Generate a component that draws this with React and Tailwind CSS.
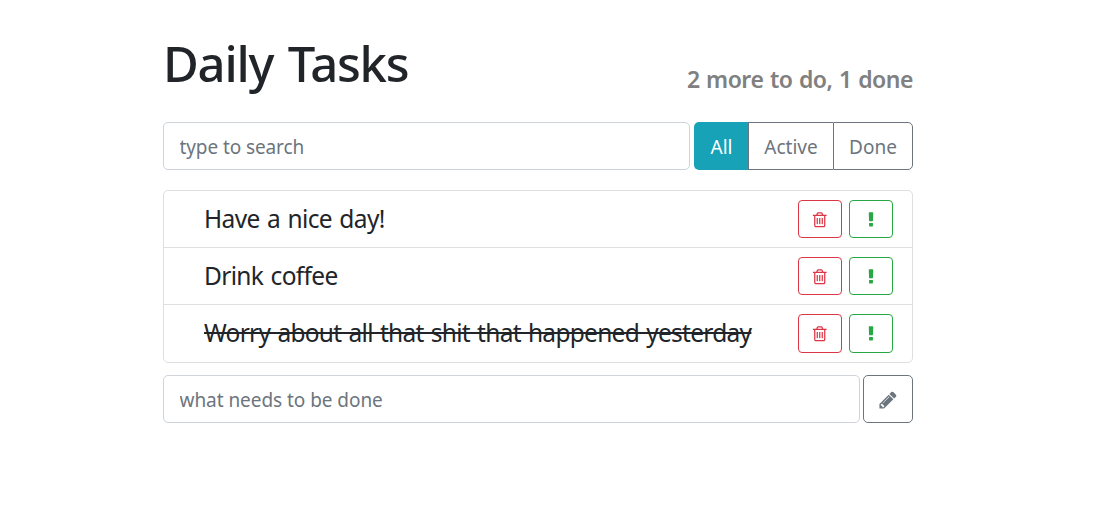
import React from "react";

function Icon({ path, className }) {
  return (
    <svg viewBox="0 0 1792 1792" fill="currentColor" className={className} aria-hidden="true">
      <path d={path} />
    </svg>
  );
}

const TRASH =
  "M704 736v576q0 14-9 23t-23 9h-64q-14 0-23-9t-9-23v-576q0-14 9-23t23-9h64q14 0 23 9t9 23zm256 0v576q0 14-9 23t-23 9h-64q-14 0-23-9t-9-23v-576q0-14 9-23t23-9h64q14 0 23 9t9 23zm256 0v576q0 14-9 23t-23 9h-64q-14 0-23-9t-9-23v-576q0-14 9-23t23-9h64q14 0 23 9t9 23zm128 724v-948h-896v948q0 22 7 40.5t14.5 27 10.5 8.5h832q3 0 10.5-8.5t14.5-27 7-40.5zm-672-1076h448l-48-117q-7-9-17-11h-317q-10 2-17 11zm928 32v64q0 14-9 23t-23 9h-96v948q0 83-47 143.5t-113 60.5h-832q-66 0-113-58.5t-47-141.5v-952h-96q-14 0-23-9t-9-23v-64q0-14 9-23t23-9h309l70-167q15-37 54-63t79-26h320q40 0 79 26t54 63l70 167h309q14 0 23 9t9 23z";
const PENCIL =
  "M491 1536l91-91-235-235-91 91v107h128v128h107zm523-928q0-22-22-22-10 0-17 7l-542 542q-7 7-7 17 0 22 22 22 10 0 17-7l542-542q7-7 7-17zm-54-192l416 416-832 832h-416v-416zm683 96q0 53-37 90l-166 166-416-416 166-165q36-38 90-38 53 0 91 38l235 234q37 39 37 91z";
const EXCLAMATION =
  "M1088 1248v224q0 26-19 45t-45 19h-256q-26 0-45-19t-19-45v-224q0-26 19-45t45-19h256q26 0 45 19t19 45zm30-1056l-28 768q-1 26-20.5 45t-45.5 19h-256q-26 0-45.5-19t-20.5-45l-28-768q-1-26 17.5-45t44.5-19h320q26 0 44.5 19t17.5 45z";

const tasks = [
  { label: "Have a nice day!", row: "h-14", button: "h-[38px]", text: "tracking-[-0.6px] [word-spacing:1.5px]" },
  { label: "Drink coffee", row: "h-14", button: "h-[38px]", text: "tracking-[-0.65px] [word-spacing:1.5px]" },
  {
    label: "Worry about all that shit that happened yesterday",
    row: "h-[57px]",
    button: "h-[39px]",
    text: "tracking-[-0.72px] [word-spacing:1.5px] line-through decoration-2",
  },
];

export default function App() {
  return (
    <main className="ml-[163px] w-[750px] pt-[34px] font-['Noto_Sans',sans-serif] text-[#212529]">
      <header className="flex h-[60px] items-end justify-between">
        <h1 className="pb-px text-[49px] leading-[60px] font-medium tracking-[-1.2px] [word-spacing:3px] whitespace-nowrap">
          Daily Tasks
        </h1>
        <h2 className="text-[23px] leading-[30px] font-semibold tracking-[-0.48px] [word-spacing:1px] whitespace-nowrap text-[#808080]">
          2 more to do, 1 done
        </h2>
      </header>

      <div className="mt-7 flex h-12 gap-1">
        <input
          type="text"
          placeholder="type to search"
          className="w-[527px] rounded-[5px] border border-[#ced4da] px-[15.5px] pt-0.5 text-[19px] tracking-[-0.1px] placeholder:text-[#6c757d]"
        />
        <div className="flex flex-1 text-[19px] text-[#6c757d]">
          <button className="w-[54px] rounded-l-[5px] bg-[#17a2b8] pt-0.5 pl-px text-white">All</button>
          <button className="w-[85px] border-y border-l border-[#6c757d] pt-0.5">Active</button>
          <button className="flex-1 rounded-r-[5px] border border-[#6c757d] pt-0.5">Done</button>
        </div>
      </div>

      <ul className="mt-5 divide-y divide-[#dfdfdf] rounded-[5px] border border-[#dfdfdf]">
        {tasks.map((task) => (
          <li key={task.label} className="flex items-center justify-between pr-[19px] pl-10">
            <span className={`text-[24.5px] leading-[56px] whitespace-nowrap ${task.row} ${task.text}`}>
              {task.label}
            </span>
            <div className="flex gap-[7px]">
              <button
                className={`flex w-11 items-center justify-center rounded-[4px] border border-[#dc3545] pt-px text-[#dc3545] ${task.button}`}
              >
                <Icon path={TRASH} className="size-[17.5px]" />
              </button>
              <button
                className={`flex w-11 items-center justify-center rounded-[4px] border border-[#28a745] pt-px text-[#28a745] ${task.button}`}
              >
                <Icon path={EXCLAMATION} className="size-[18px]" />
              </button>
            </div>
          </li>
        ))}
      </ul>

      <form className="mt-3 flex h-12 gap-[3px]">
        <input
          type="text"
          placeholder="what needs to be done"
          className="w-[697px] rounded-[5px] border border-[#ced4da] px-[15.5px] pt-0.5 text-[19px] tracking-[-0.05px] placeholder:text-[#6c757d]"
        />
        <button
          type="button"
          className="flex flex-1 items-center justify-center rounded-[5px] border border-[#6c757d] pt-0.5 text-[#6c757d]"
        >
          <Icon path={PENCIL} className="size-5" />
        </button>
      </form>
    </main>
  );
}
